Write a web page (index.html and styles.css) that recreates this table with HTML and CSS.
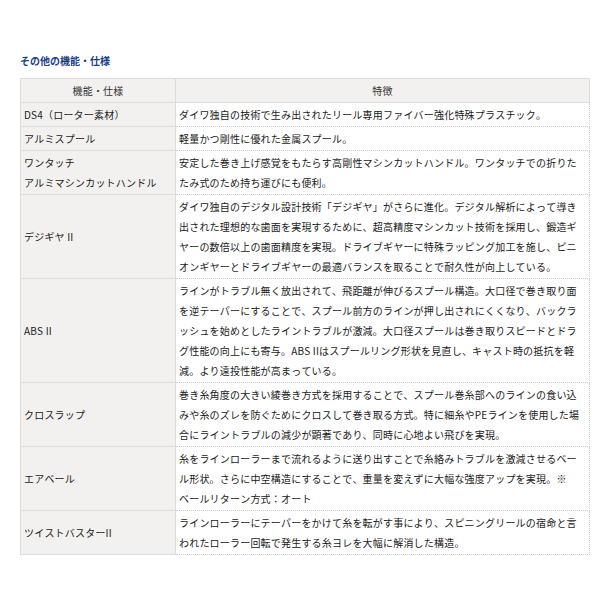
FILE: index.html
```html
<!DOCTYPE html>
<html lang="ja">
<head>
    <meta charset="UTF-8">
    <meta name="viewport" content="width=device-width, initial-scale=1.0">
    <title>その他の機能・仕様</title>
    <link rel="stylesheet" href="styles.css">
</head>
<body>
    <div class="spec-section">
        <h3 class="spec-title">その他の機能・仕様</h3>
        <table class="spec-table">
            <thead>
                <tr>
                    <th class="spec-name">機能・仕様</th>
                    <th class="spec-desc">特徴</th>
                </tr>
            </thead>
            <tbody>
                <tr>
                    <td class="spec-name">DS4（ローター素材）</td>
                    <td class="spec-desc">ダイワ独自の技術で生み出されたリール専用ファイバー強化特殊プラスチック。</td>
                </tr>
                <tr>
                    <td class="spec-name">アルミスプール</td>
                    <td class="spec-desc">軽量かつ剛性に優れた金属スプール。</td>
                </tr>
                <tr>
                    <td class="spec-name">ワンタッチ<br>アルミマシンカットハンドル</td>
                    <td class="spec-desc">安定した巻き上げ感覚をもたらす高剛性マシンカットハンドル。ワンタッチでの折りたたみ式のため持ち運びにも便利。</td>
                </tr>
                <tr>
                    <td class="spec-name">デジギヤ II</td>
                    <td class="spec-desc">ダイワ独自のデジタル設計技術「デジギヤ」がさらに進化。デジタル解析によって導き出された理想的な歯面を実現するために、超高精度マシンカット技術を採用し、鍛造ギヤーの数倍以上の歯面精度を実現。ドライブギヤーに特殊ラッピング加工を施し、ピニオンギヤーとドライブギヤーの最適バランスを取ることで耐久性が向上している。</td>
                </tr>
                <tr>
                    <td class="spec-name">ABS II</td>
                    <td class="spec-desc">ラインがトラブル無く放出されて、飛距離が伸びるスプール構造。大口径で巻き取り面を逆テーパーにすることで、スプール前方のラインが押し出されにくくなり、バックラッシュを始めとしたライントラブルが激減。大口径スプールは巻き取りスピードとドラグ性能の向上にも寄与。ABS IIはスプールリング形状を見直し、キャスト時の抵抗を軽減。より遠投性能が高まっている。</td>
                </tr>
                <tr>
                    <td class="spec-name">クロスラップ</td>
                    <td class="spec-desc">巻き糸角度の大きい綾巻き方式を採用することで、スプール巻糸部へのラインの食い込みや糸のズレを防ぐためにクロスして巻き取る方式。特に細糸やPEラインを使用した場合にライントラブルの減少が顕著であり、同時に心地よい飛びを実現。</td>
                </tr>
                <tr>
                    <td class="spec-name">エアベール</td>
                    <td class="spec-desc">糸をラインローラーまで流れるように送り出すことで糸絡みトラブルを激減させるベール形状。さらに中空構造にすることで、重量を変えずに大幅な強度アップを実現。※<br>ベールリターン方式：オート</td>
                </tr>
                <tr>
                    <td class="spec-name">ツイストバスターII</td>
                    <td class="spec-desc">ラインローラーにテーパーをかけて糸を転がす事により、スピニングリールの宿命と言われたローラー回転で発生する糸ヨレを大幅に解消した構造。</td>
                </tr>
            </tbody>
        </table>
    </div>
</body>
</html>
```

FILE: styles.css
```css
body {
    margin: 0;
    padding: 0;
    background: #fff;
    color: #1a1a1a;
    font-family: "Noto Sans CJK JP", "Noto Sans", sans-serif;
    font-size: 10px;
}
.spec-section {
    padding: 54px 11px 20px 20px;
}
.spec-title {
    margin: 0 0 10px 0;
    font-size: 10px;
    line-height: 14px;
    font-weight: bold;
    color: #1b3f8b;
}
.spec-table {
    width: 570px;
    border-collapse: collapse;
    letter-spacing: 0.2px;
    font-kerning: none;
    text-spacing-trim: space-all;
}
.spec-table th,
.spec-table td {
    padding: 2px 3px 1px 3px;
    line-height: 20px;
    border: 1px solid #dcdcdc;
    text-align: left;
    vertical-align: middle;
}
.spec-table th {
    font-weight: normal;
    text-align: center;
    background: #f2f1ef;
    color: #333;
}
.spec-table .spec-name {
    width: 148px;
}
.spec-table td.spec-name {
    background: #f2f1ef;
}
.spec-table td.spec-desc {
    padding-right: 8px;
    background: #fff;
    border-style: dotted;
    border-color: #cfcfcf;
    border-left: 1px solid #dcdcdc;
}
```
